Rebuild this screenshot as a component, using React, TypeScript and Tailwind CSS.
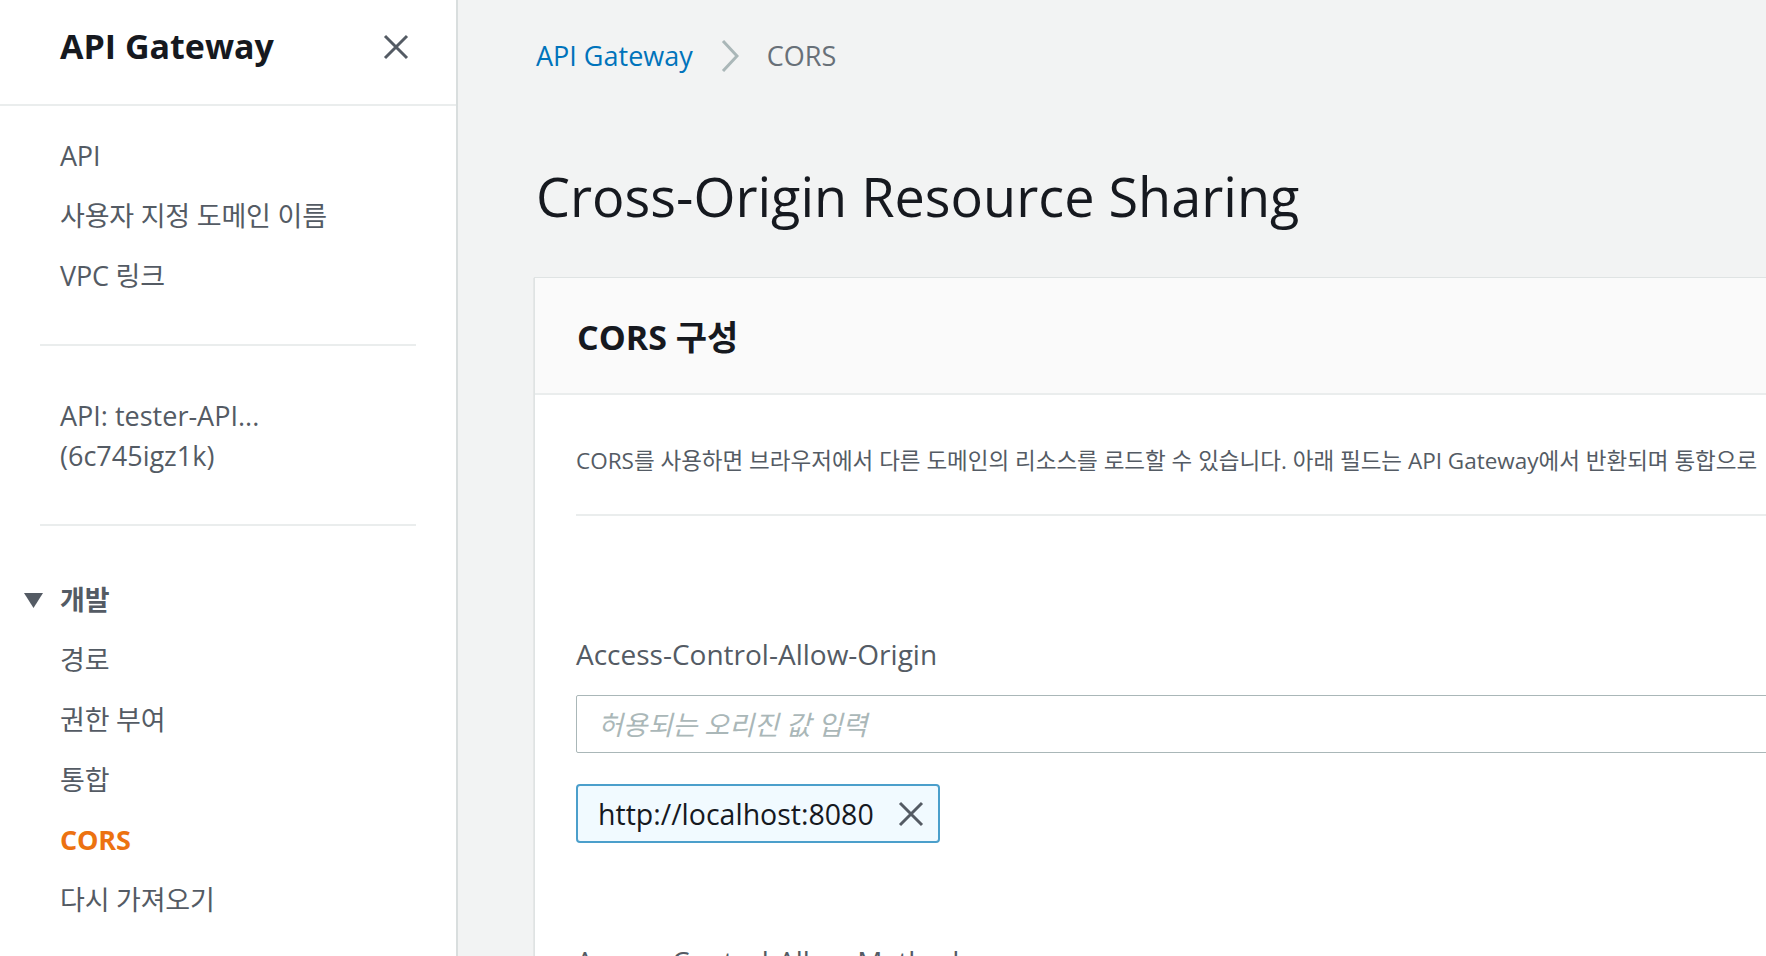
import { ReactNode } from "react";

const navTop = ["API", "사용자 지정 도메인 이름", "VPC 링크"];
const devItems = ["경로", "권한 부여", "통합", "CORS", "다시 가져오기"];

function NavItem({ children, active }: { children: ReactNode; active?: boolean }) {
  return (
    <div
      className={`h-[60px] flex items-center pl-[60px] text-[27px] leading-[36px] tracking-[-0.2px] ${
        active ? "text-[#ec7211] font-bold" : "text-[#545b64]"
      }`}
    >
      {children}
    </div>
  );
}

function CloseIcon({ className }: { className?: string }) {
  return (
    <svg viewBox="0 0 26 26" className={className} fill="none">
      <path d="M2 2L24 24M24 2L2 24" stroke="#545b64" strokeWidth="3" />
    </svg>
  );
}

function SideNav() {
  return (
    <aside className="w-[458px] shrink-0 h-full bg-white border-r-2 border-[#d9dede] flex flex-col">
      <div className="h-[106px] shrink-0 flex items-center justify-between pl-[60px] pr-[47px] pb-[12px] border-b-2 border-[#eaeded]">
        <span className="text-[34px] leading-[44px] font-bold text-[#16191f]">API Gateway</span>
        <button className="mt-[2px]">
          <CloseIcon className="w-[26px] h-[26px]" />
        </button>
      </div>
      <nav className="pt-[20px]">
        {navTop.map((item) => (
          <NavItem key={item}>{item}</NavItem>
        ))}
      </nav>
      <div className="mx-[40px] mt-[38px] h-[2px] bg-[#eaeded]" />
      <div className="mt-[50px] mb-[48px] pl-[60px] text-[27px] leading-[40px] text-[#545b64]">
        <div>API: tester-API...</div>
        <div>(6c745igz1k)</div>
      </div>
      <div className="mx-[40px] h-[2px] bg-[#eaeded]" />
      <div className="pt-[44px]">
        <div className="h-[60px] flex items-center text-[27px] leading-[36px] font-bold text-[#545b64]">
          <svg viewBox="0 0 19 15" className="w-[19px] h-[15px] ml-[24px] mr-[17px]">
            <polygon points="0,0 19,0 9.5,15" fill="#545b64" />
          </svg>
          개발
        </div>
        {devItems.map((item) => (
          <NavItem key={item} active={item === "CORS"}>
            {item}
          </NavItem>
        ))}
      </div>
    </aside>
  );
}

function App() {
  return (
    <div className="flex h-screen w-full overflow-hidden font-['Open_Sans','Noto_Sans_CJK_KR',sans-serif]">
      <SideNav />
      <main className="flex-1 min-w-0 bg-[#f2f3f3] pl-[76px] pt-[38px] overflow-hidden">
        <div className="flex items-center h-[36px] pl-[2px] text-[27px] leading-[36px]">
          <a className="text-[#0073bb]">API Gateway</a>
          <svg viewBox="0 0 18 32" className="w-[18px] h-[32px] mx-[28px]" fill="none">
            <path d="M2 1L16 16L2 31" stroke="#aab7b8" strokeWidth="3" />
          </svg>
          <span className="text-[#687078]">CORS</span>
        </div>
        <h1 className="mt-[87px] pl-[2px] text-[54px] leading-[70px] text-[#16191f]">
          Cross-Origin Resource Sharing
        </h1>
        <div className="mt-[46px] w-[1500px] bg-white border-t border-l border-[#dfe3e3] shadow-[0_1px_1px_0_rgba(0,28,36,0.3),1px_1px_1px_0_rgba(0,28,36,0.15)]">
          <div className="h-[117px] flex items-center pl-[42px] pt-[2px] bg-[#fafafa] border-b-2 border-[#eaeded]">
            <h2 className="text-[34px] leading-[44px] font-bold text-[#16191f]">CORS 구성</h2>
          </div>
          <div className="pl-[41px] pt-[50px] pb-[40px]">
            <p className="text-[22.5px] leading-[32px] text-[#545b64] whitespace-nowrap">
              CORS를 사용하면 브라우저에서 다른 도메인의 리소스를 로드할 수 있습니다. 아래 필드는 API Gateway에서 반환되며 통합으로
            </p>
            <div className="mt-[37px] h-[2px] bg-[#eaeded]" />
            <label className="block mt-[119px] text-[28px] leading-[38px] text-[#545b64]">
              Access-Control-Allow-Origin
            </label>
            <input
              className="mt-[22px] block w-full h-[58px] border border-[#aab7b8] rounded-[2px] pl-[21px] text-[27px] outline-none placeholder:italic placeholder:text-[#aab7b8]"
              placeholder="허용되는 오리진 값 입력"
            />
            <div className="mt-[31px] inline-flex items-center h-[59px] pl-[20px] pr-[14px] bg-[#f1faff] border-2 border-[#4b9fcb] rounded-[4px]">
              <span className="text-[28.5px] leading-[36px] text-[#16191f]">http://localhost:8080</span>
              <CloseIcon className="w-[26px] h-[26px] ml-[24px]" />
            </div>
            <label className="block mt-[99px] text-[28px] leading-[38px] text-[#545b64]">
              Access-Control-Allow-Methods
            </label>
          </div>
        </div>
      </main>
    </div>
  );
}

export default App;
